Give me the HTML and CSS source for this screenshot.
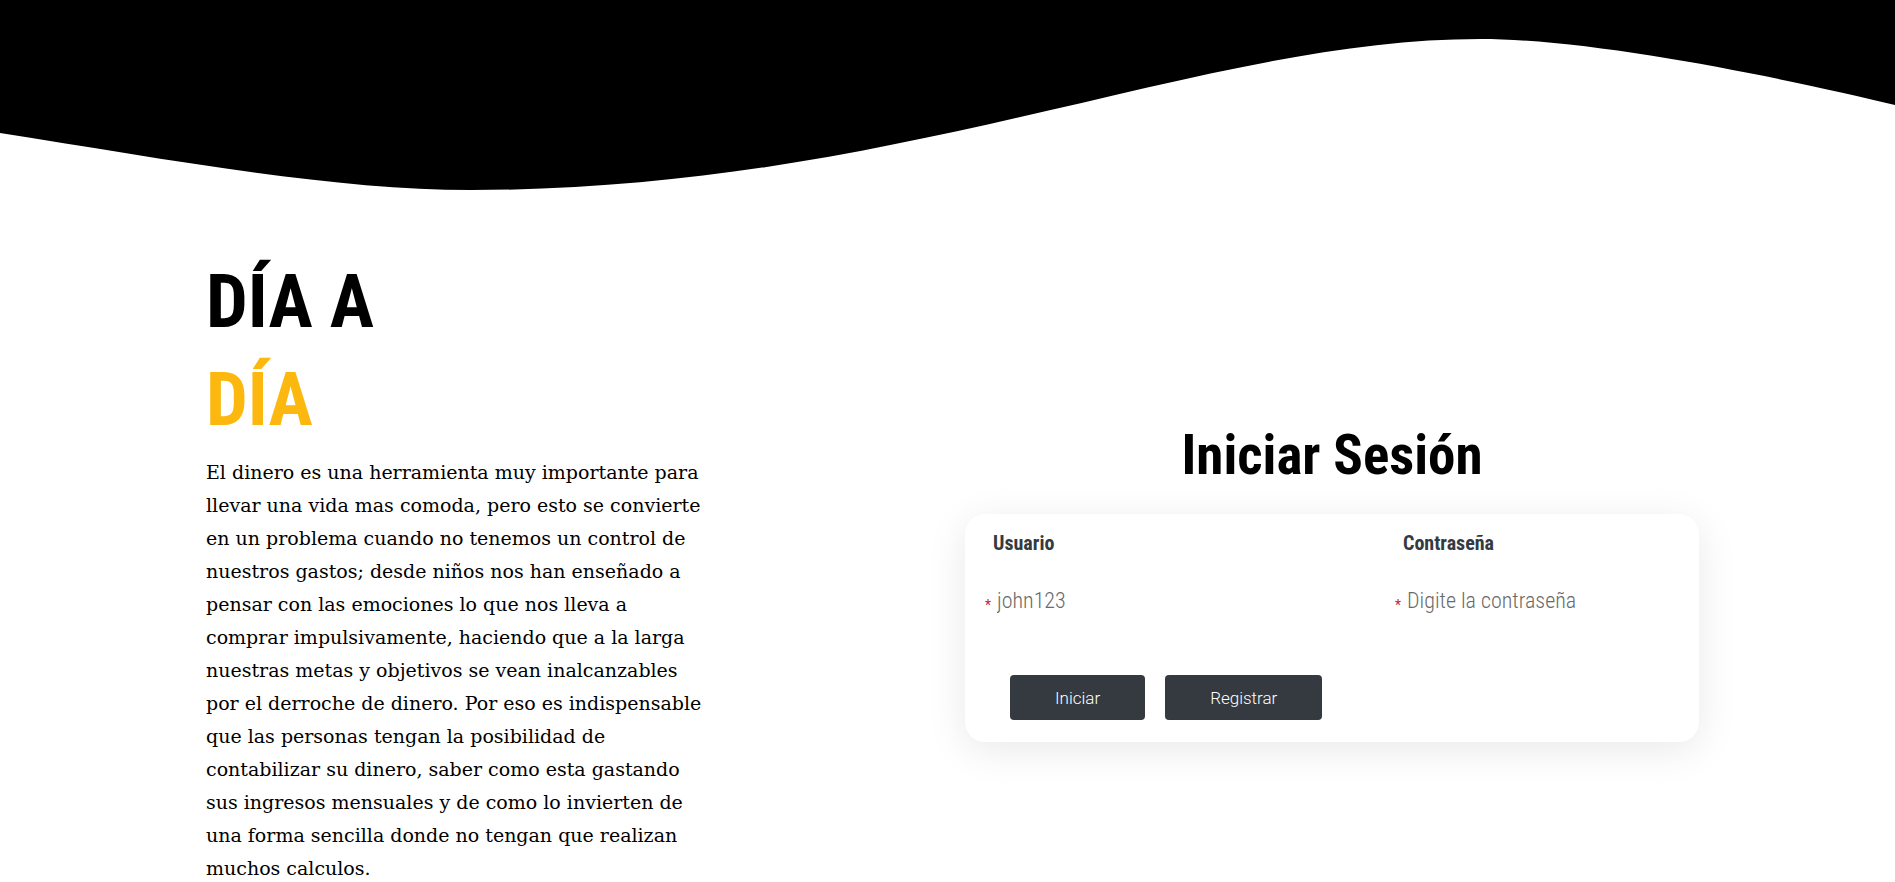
FILE: index.html
```html
<!DOCTYPE html>
<html lang="es">
<head>
<meta charset="utf-8">
<title>Día a Día</title>
<link rel="stylesheet" href="styles.css">
</head>
<body>
<svg class="wave" viewBox="0 0 1895 190" preserveAspectRatio="none" aria-hidden="true">
  <path d="M0,0 H1895 V105 C1800,82 1600,39 1480,39 C1200,39 900,190 471,190 C330,190 160,158 0,133 Z" fill="#000"/>
</svg>
<main class="hero">
  <section class="intro">
    <h1 class="intro-title">DÍA A<br><span class="accent">DÍA</span></h1>
    <p class="intro-text">El dinero es una herramienta muy importante para<br>llevar una vida mas comoda, pero esto se convierte<br>en un problema cuando no tenemos un control de<br>nuestros gastos; desde niños nos han enseñado a<br>pensar con las emociones lo que nos lleva a<br>comprar impulsivamente, haciendo que a la larga<br>nuestras metas y objetivos se vean inalcanzables<br>por el derroche de dinero. Por eso es indispensable<br>que las personas tengan la posibilidad de<br>contabilizar su dinero, saber como esta gastando<br>sus ingresos mensuales y de como lo invierten de<br>una forma sencilla donde no tengan que realizan<br>muchos calculos.</p>
  </section>
  <section class="login">
    <h2 class="login-title">Iniciar Sesión</h2>
    <form class="login-card">
      <div class="fields">
        <div class="field">
          <label class="field-label" for="user">Usuario</label>
          <div class="field-input"><span class="req">*</span><input id="user" type="text" placeholder="john123"></div>
        </div>
        <div class="field">
          <label class="field-label" for="pass">Contraseña</label>
          <div class="field-input"><span class="req">*</span><input id="pass" type="password" placeholder="Digite la contraseña"></div>
        </div>
      </div>
      <div class="actions">
        <button type="button" class="btn">Iniciar</button>
        <button type="button" class="btn">Registrar</button>
      </div>
    </form>
  </section>
</main>
</body>
</html>
```

FILE: styles.css
```css
html, body {
  margin: 0;
  padding: 0;
  height: 100%;
  overflow: hidden;
  background: #fff;
}

body {
  font-family: "Roboto Condensed", Roboto, "Liberation Sans", sans-serif;
}

.wave {
  display: block;
  width: 100%;
  height: 190px;
}

.hero {
  width: 1503px;
  margin: 0 auto;
  display: flex;
  justify-content: space-between;
  align-items: flex-start;
}

.intro {
  padding-left: 10px;
  padding-top: 63px;
}

.intro-title {
  margin: 0;
  font-family: "Roboto Condensed", Roboto, sans-serif;
  font-weight: 700;
  font-size: 74px;
  line-height: 98px;
  color: #000;
}

.accent {
  color: #fcb80e;
}

.intro-text {
  margin: 7px 0 0;
  font-family: "DejaVu Serif", "Liberation Serif", serif;
  font-size: 19px;
  line-height: 33px;
  color: #000;
  white-space: nowrap;
}

.login {
  width: 734px;
  margin-top: 234px;
}

.login-title {
  margin: 0 0 28px;
  text-align: center;
  font-family: "Roboto Condensed", Roboto, sans-serif;
  font-weight: 700;
  font-size: 55px;
  line-height: 62px;
  color: #000;
}

.login-card {
  background: #fff;
  border-radius: 20px;
  box-shadow: 0 8px 40px rgba(0, 0, 0, 0.09);
  padding: 17px 20px 22px;
}

.fields {
  display: grid;
  grid-template-columns: 410px 1fr;
}

.field-label {
  display: block;
  margin-left: 8px;
  font-weight: 700;
  font-size: 20px;
  line-height: 24px;
  color: #343a40;
}

.field-input {
  display: flex;
  align-items: center;
  margin-top: 25px;
  height: 40px;
}

.req {
  color: #c82333;
  font-family: Roboto, sans-serif;
  font-size: 14px;
  line-height: 1;
  margin-top: 9px;
  width: 12px;
}

.field-input input {
  border: none;
  outline: none;
  padding: 0;
  height: 40px;
  width: 300px;
  background: transparent;
  font-family: "Roboto Condensed", Roboto, sans-serif;
  font-weight: 300;
  font-size: 22px;
  color: #6c757d;
}

.field-input input::placeholder {
  color: #6a6a6a;
  opacity: 1;
}

.actions {
  display: flex;
  gap: 20px;
  margin-top: 55px;
  padding-left: 25px;
}

.btn {
  height: 45px;
  padding: 0 45px;
  border: none;
  border-radius: 4px;
  background: #343a40;
  color: #fff;
  font-family: Roboto, sans-serif;
  font-weight: 300;
  font-size: 17px;
}
```
